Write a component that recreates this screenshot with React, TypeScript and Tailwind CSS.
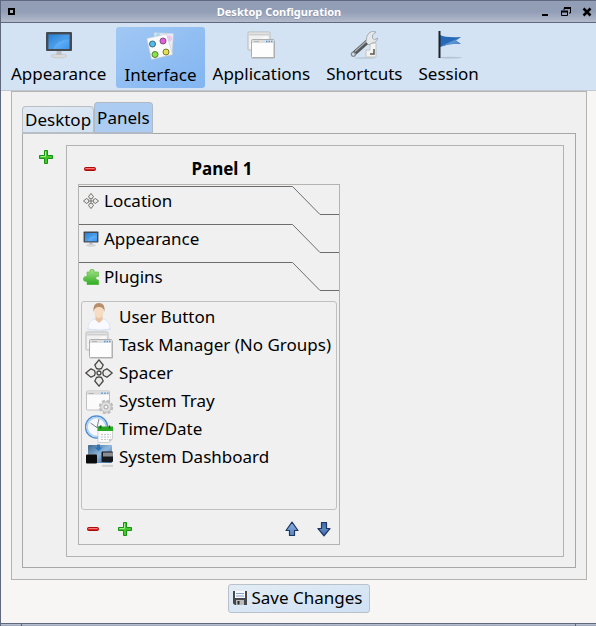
import type { ReactNode } from "react";

function MonitorIcon({ className }: { className: string }) {
  return (
    <svg viewBox="0 0 28 28" className={className} aria-hidden="true">
      <defs>
        <linearGradient id="screen" x1="0" y1="0" x2="1" y2="1">
          <stop offset="0" stopColor="#2c86dd" />
          <stop offset="0.5" stopColor="#62b1f7" />
          <stop offset="1" stopColor="#3d94ea" />
        </linearGradient>
      </defs>
      <ellipse cx="14" cy="25" rx="8" ry="2" fill="#dadada" stroke="#b5b9bd" strokeWidth="0.5" />
      <path d="M11.5 20h5v4h-5z" fill="#b9bcc0" />
      <rect x="1" y="1" width="26" height="19" rx="1" fill="#454a50" />
      <rect x="3.500" y="3.500" width="21" height="14.500" fill="url(#screen)" />
      <path d="M3.500 3.500H24.500V8Q12 9 8 18H3.500z" fill="#1f78cc" opacity="0.35" />
    </svg>
  );
}

function CardsIcon({ className }: { className: string }) {
  return (
    <svg viewBox="0 0 28 28" className={className} aria-hidden="true">
      <path d="M8 .8L27.500 1.500L26 23L11 22z" fill="#e9edf5" stroke="#c5cedd" strokeWidth="0.6" />
      <circle cx="12" cy="3.500" r="2.500" fill="#a9d8f5" />
      <circle cx="23" cy="6.500" r="3" fill="#efc5ee" />
      <path d="M.8 6.500L20.500 2L26.500 22.500L5.500 27.500z" fill="#fafafa" stroke="#c4c9d0" strokeWidth="0.6" />
      <circle cx="6.500" cy="12" r="3" fill="#4fc0ee" stroke="#426779" />
      <circle cx="17" cy="9" r="3" fill="#e45be0" stroke="#80517e" />
      <circle cx="9" cy="22.500" r="3" fill="#86e545" stroke="#557c39" />
      <circle cx="20" cy="20" r="3" fill="#e4e14a" stroke="#77753a" />
    </svg>
  );
}

function WindowsIcon({ className }: { className: string }) {
  return (
    <svg viewBox="0 0 28 28" className={className} aria-hidden="true">
      <rect x="1" y="1" width="22" height="18" rx="1" fill="#f1f1f1" stroke="#b9b9b9" />
      <path d="M2 3.500H22" stroke="#cfcfcf" strokeWidth="2" />
      <path d="M3 15L20 6" stroke="#fff" strokeWidth="3" opacity="0.7" />
      <path d="M4.500 27H27.500V10" fill="none" stroke="#8f8f8f" opacity="0.6" />
      <rect x="4.500" y="8.500" width="22.500" height="18" rx="1" fill="#fdfdfd" stroke="#adadad" />
      <path d="M5 10.500H26.500" stroke="#dedede" strokeWidth="3" />
      <path d="M7 10.500H12" stroke="#b5b5b5" />
      <path d="M19 10.500h1.500M21.500 10.500h1.500M24 10.500h1.500" stroke="#4e9be0" strokeWidth="1.500" />
    </svg>
  );
}

function WrenchIcon({ className }: { className: string }) {
  return (
    <svg viewBox="0 0 28 28" className={className} aria-hidden="true">
      <ellipse cx="15" cy="27" rx="11" ry="0.8" fill="#b8c7d6" />
      <path d="M20 12h6v14H16v-7h4z" fill="#f3f3f1" stroke="#c4c4c2" />
      <path d="M24 18v5h-4" fill="none" stroke="#555" strokeWidth="1.500" />
      <path d="M3.500 23L17 11" stroke="#55585b" strokeWidth="4.500" strokeLinecap="round" />
      <path d="M5 20.500L16 10.500" stroke="#aeb2b5" strokeWidth="1.200" />
      <circle cx="3.300" cy="23.300" r="2" fill="#d3e3f3" stroke="#8a8d90" strokeWidth="1.300" />
      <path d="M16 11Q16 5 19 2Q22 -1 26 1L22.500 4V7L24.500 9L27.500 7Q27 12 22 12L19 14z" fill="#e6e9eb" stroke="#9a9ea2" strokeWidth="0.8" />
    </svg>
  );
}

function FlagIcon({ className }: { className: string }) {
  return (
    <svg viewBox="0 0 28 28" className={className} aria-hidden="true">
      <ellipse cx="15" cy="26.700" rx="12" ry="0.9" fill="#b3c4d5" />
      <path d="M5 4Q11 7 26 6L21 9.500L26 13Q15 12 5 16z" fill="#2869b5" />
      <path d="M6 15.500Q12 12 25 6.800L20.500 9.500L25 12.500Q15 12 6 15.500z" fill="#5b93d2" />
      <path d="M4.500 0V27" stroke="#202326" strokeWidth="2" />
    </svg>
  );
}

function MoveIcon({ className }: { className: string }) {
  return (
    <svg viewBox="0 0 28 28" className={className} aria-hidden="true">
      <g fill="#ecebe7" stroke="#484846" strokeWidth="1.300" strokeLinejoin="round">
        <path d="M14 .8L18.200 6L16.500 9.500L14 10.200L11.500 9.500L9.800 6z" />
        <path d="M14 27.200L18.200 22L16.500 18.500L14 17.800L11.500 18.500L9.800 22z" />
        <path d="M.8 14L6 9.800L9.500 11.500L10.200 14L9.500 16.500L6 18.200z" />
        <path d="M27.200 14L22 9.800L18.500 11.500L17.800 14L18.500 16.500L22 18.200z" />
        <circle cx="14" cy="14" r="2" />
      </g>
    </svg>
  );
}

function PuzzleIcon({ className }: { className: string }) {
  return (
    <svg viewBox="0 0 16 16" className={className} aria-hidden="true">
      <defs>
        <linearGradient id="puzzle" x1="0" y1="0" x2="0" y2="1">
          <stop offset="0" stopColor="#a6e48a" />
          <stop offset="1" stopColor="#2faa22" />
        </linearGradient>
      </defs>
      <path
        d="M4 3H7Q6 .3 9 .3T11 3H15.700V7.500Q12.800 6.800 12.800 9T15.700 11V15.700H4V12.500Q.3 13 .3 9.800Q.6 7 4 7.500z"
        fill="url(#puzzle)"
        stroke="#55b83d"
        strokeWidth="0.6"
      />
    </svg>
  );
}

function UserIcon({ className }: { className: string }) {
  return (
    <svg viewBox="0 0 28 28" className={className} aria-hidden="true">
      <ellipse cx="14" cy="26" rx="12" ry="1.800" fill="#d5def2" />
      <path d="M3 26Q3 17.500 10 16H18Q25 17.500 25 26Q14 28 3 26z" fill="#f8faff" stroke="#d5dcec" strokeWidth="0.7" />
      <path d="M10.500 12h7v5L14 20L10.500 17z" fill="#e8c3a2" />
      <ellipse cx="14" cy="8" rx="4.800" ry="7" fill="#f6dcc3" />
      <path d="M8.500 9Q7.500 0 14 0T19.500 9Q18.500 4 14 4T8.500 9z" fill="#b98e6a" />
    </svg>
  );
}

function TrayIcon({ className }: { className: string }) {
  return (
    <svg viewBox="0 0 28 28" className={className} aria-hidden="true">
      <rect x="1.500" y="4" width="23" height="19" rx="1" fill="#fbfbfb" stroke="#c0c0c0" />
      <path d="M2 6.200H24" stroke="#dcdcdc" strokeWidth="3" />
      <path d="M3.500 6.500H9" stroke="#aeb5bc" />
      <path d="M16 6.200h2M19 6.200h2M22 6.200h1.500" stroke="#72a7df" strokeWidth="1.500" />
      <circle cx="21" cy="20" r="6" fill="none" stroke="#bdbdbd" strokeWidth="2.500" strokeDasharray="3 1.700" />
      <circle cx="21" cy="20" r="5.300" fill="#dedede" stroke="#bebebe" />
      <circle cx="21" cy="20" r="2" fill="#f5f5f5" stroke="#a5a5a5" />
    </svg>
  );
}

function ClockIcon({ className }: { className: string }) {
  return (
    <svg viewBox="0 0 28 28" className={className} aria-hidden="true">
      <circle cx="11.500" cy="12" r="11" fill="#f5f8fc" stroke="#4d91d4" strokeWidth="1.500" />
      <circle cx="11.500" cy="12" r="9.400" fill="none" stroke="#b5d1ec" strokeWidth="1.500" />
      <path d="M5.500 8L12 12.500L14 4M12 12.500L17 11" stroke="#7c838c" strokeWidth="1" fill="none" />
      <path d="M13 13H27.500V24L24 27.500H13z" fill="#fafafa" stroke="#bfc2bf" strokeWidth="0.7" />
      <path d="M12.500 11.500H28V16H12.500z" fill="#27a923" />
      <path d="M15.500 10.500v3M24.500 10.500v3" stroke="#145f14" strokeWidth="1.500" />
      <path d="M16 19.500H26M16 22H26M16 24.500H23" stroke="#c4c9cf" strokeDasharray="2 1" />
      <path d="M24 27.500V24H27.500z" fill="#c2c7c6" />
    </svg>
  );
}

function DashboardIcon({ className }: { className: string }) {
  return (
    <svg viewBox="0 0 28 28" className={className} aria-hidden="true">
      <defs>
        <linearGradient id="dash" x1="0" y1="0" x2="1" y2="1">
          <stop offset="0" stopColor="#3d668d" />
          <stop offset="0.5" stopColor="#8eb8de" />
          <stop offset="1" stopColor="#315c88" />
        </linearGradient>
      </defs>
      <rect x="3" y="2" width="24" height="18" rx="1" fill="url(#dash)" />
      <path d="M12 1.500h3v3h2.500L13.500 8L9.500 4.500H12z" fill="#2b73ba" />
      <rect x="1" y="11.500" width="11" height="9" rx="1" fill="#080a0c" />
      <path d="M3 11.500h7" stroke="#555" />
      <rect x="16.500" y="8.500" width="11.500" height="10.500" rx="1" fill="#16191d" />
      <rect x="18" y="9.500" width="10" height="4" fill="#8a8e92" />
      <path d="M17 22.800H28" stroke="#cfcfcf" strokeWidth="2" />
    </svg>
  );
}

function PlusIcon() {
  return (
    <svg viewBox="0 0 16 16" className="size-4" aria-hidden="true">
      <path d="M6.500 1.500h3v5h5v3h-5v5h-3v-5h-5v-3h5z" fill="#45c62d" stroke="#159310" strokeLinejoin="round" />
      <path d="M7.500 2.500v5h-5" fill="none" stroke="#a0ec8c" />
    </svg>
  );
}

function MinusIcon() {
  return (
    <svg viewBox="0 0 16 16" className="size-4" aria-hidden="true">
      <rect x="2.500" y="6.500" width="11" height="3" rx="1" fill="#dd2222" stroke="#a90a0a" />
      <path d="M3.500 7.500h9" stroke="#f47a7a" />
    </svg>
  );
}

function ArrowIcon({ down = false }: { down?: boolean }) {
  return (
    <svg viewBox="0 0 16 16" className="size-4" aria-hidden="true">
      <defs>
        <linearGradient id="arrowUp" x1="0" y1="0" x2="0" y2="1">
          <stop offset="0" stopColor="#8fb0de" />
          <stop offset="1" stopColor="#5a86c2" />
        </linearGradient>
        <linearGradient id="arrowDown" x1="0" y1="0" x2="0" y2="1">
          <stop offset="0" stopColor="#3c68a6" />
          <stop offset="0.5" stopColor="#5e86bd" />
          <stop offset="1" stopColor="#3566a8" />
        </linearGradient>
      </defs>
      <path
        d={down ? "M5.500 1.500h5v6h3.500L8 14.800L2 7.500h3.500z" : "M5.500 14.500h5v-5h3.500L8 1.200L2 9.500h3.500z"}
        fill={down ? "url(#arrowDown)" : "url(#arrowUp)"}
        stroke="#1c3763"
        strokeWidth="1.200"
        strokeLinejoin="round"
      />
    </svg>
  );
}

function SaveIcon() {
  return (
    <svg viewBox="0 0 16 16" className="size-4" aria-hidden="true">
      <path d="M1 1h14v14H3l-2-1.500z" fill="#46474b" />
      <path d="M3 1h10v7H3z" fill="#fafafa" />
      <path d="M4 3.500h8M4 6h8" stroke="#7f9dc5" />
      <path d="M4 10h8v5H4z" fill="#b9babb" />
      <path d="M5.500 11h2v3.500h-2z" fill="#292a2d" />
    </svg>
  );
}

const tools = [
  { label: "Appearance", Icon: MonitorIcon },
  { label: "Interface", Icon: CardsIcon },
  { label: "Applications", Icon: WindowsIcon },
  { label: "Shortcuts", Icon: WrenchIcon },
  { label: "Session", Icon: FlagIcon },
];

const plugins = [
  { label: "User Button", Icon: UserIcon },
  { label: "Task Manager (No Groups)", Icon: WindowsIcon },
  { label: "Spacer", Icon: MoveIcon },
  { label: "System Tray", Icon: TrayIcon },
  { label: "Time/Date", Icon: ClockIcon },
  { label: "System Dashboard", Icon: DashboardIcon },
];

const sections = [
  { label: "Location", Icon: MoveIcon },
  { label: "Appearance", Icon: MonitorIcon },
  { label: "Plugins", Icon: PuzzleIcon },
];

function SectionHeader({ icon, label }: { icon: ReactNode; label: string }) {
  return (
    <div className="flex h-[38px] items-start">
      <button className="flex h-7 flex-1 items-center gap-[5px] border-t border-[#6f6d6b] pl-1 text-left">
        {icon}
        {label}
      </button>
      <svg viewBox="0 0 47 30" className="h-[30px] w-[47px]" aria-hidden="true">
        <path d="M0 .5H.5L28 28.500H47" fill="none" stroke="#6f6d6b" />
      </svg>
    </div>
  );
}

function IconButton({ label, children }: { label: string; children: ReactNode }) {
  return (
    <button aria-label={label} className="flex size-7 items-center justify-center">
      {children}
    </button>
  );
}

export default function App() {
  return (
    <div className="flex min-h-screen flex-col border-l border-[#60687e] bg-[#f7f6f4] font-['Noto_Sans',sans-serif] text-[17px] leading-6 text-black">
      <header className="flex h-[23px] items-center border-t border-b border-[#60687e] bg-linear-to-b from-[#929db6] from-50% to-[#b3bbcb] pr-[3px] pl-[6px]">
        <button aria-label="Window menu" className="flex h-4 w-[14px] items-center">
          <svg viewBox="0 0 9 9" className="size-[9px]" aria-hidden="true">
            <path d="M2 2h5v5H2z" fill="#a5acbd" stroke="#000" strokeWidth="2" />
          </svg>
        </button>
        <h1 className="flex-1 text-center text-[11px] leading-4 font-bold text-white text-shadow-2xs">Desktop Configuration</h1>
        <div className="flex w-[56px] justify-end gap-[9px]">
          <button aria-label="Minimize">
            <svg viewBox="0 0 12 12" className="size-3" aria-hidden="true">
              <path d="M3 9h6" stroke="#000" strokeWidth="2" />
            </svg>
          </button>
          <button aria-label="Maximize">
            <svg viewBox="0 0 12 12" className="size-3" aria-hidden="true">
              <path d="M4 4V2.500h6.500V7H9M1.500 5.500h6v4h-6z" fill="none" stroke="#000" />
              <path d="M4 2h7M1 5.500h7" stroke="#000" strokeWidth="2" />
            </svg>
          </button>
          <button aria-label="Close">
            <svg viewBox="0 0 12 12" className="size-3" aria-hidden="true">
              <path d="M2.500 2.500l7 7M9.500 2.500l-7 7" stroke="#000" strokeWidth="2.500" />
            </svg>
          </button>
        </div>
      </header>

      <nav className="flex h-[68px] items-end border-b border-[#c2c8cf] bg-[#d3e3f3] pb-[2px] pl-[2px]">
        {tools.map(({ label, Icon }) => (
          <button
            key={label}
            aria-pressed={label === "Interface"}
            className={
              label === "Interface"
                ? "ml-[2px] flex h-[61px] flex-col items-center gap-[3px] rounded-[3px] bg-linear-to-br from-[#a1c8f4] to-[#82b5f1] px-2 pt-[5px]"
                : "flex h-[61px] flex-col items-center gap-[3px] px-2 pt-1"
            }
          >
            <Icon className="size-7" />
            {label}
          </button>
        ))}
      </nav>

      <main className="mr-[9px] ml-[10px] flex flex-1 flex-col border border-[#b5b3b1] bg-[#f0f0f0] px-[10px] pt-[10px] pb-[11px]">
        <div role="tablist" className="z-10 -mb-px flex items-end">
          <button
            role="tab"
            aria-selected="false"
            className="h-7 rounded-t-[4px] border border-b-2 border-[#b9bec4] bg-linear-to-br from-[#e2eaf2] to-[#cfe1f3] px-[2px] pt-px"
          >
            Desktop
          </button>
          <button
            role="tab"
            aria-selected="true"
            className="h-8 rounded-t-[4px] border border-b-2 border-[#b0b9c4] bg-[#accdf1] px-[2px] pt-px"
          >
            Panels
          </button>
        </div>

        <section role="tabpanel" className="flex flex-1 border border-[#a9a7a5] pt-[11px] pr-[11px] pb-[10px]">
          <div className="flex w-[43px] justify-center pl-[3px]">
            <button aria-label="Add panel" className="flex size-6 items-center justify-center">
              <PlusIcon />
            </button>
          </div>
          <div className="flex flex-1 border border-[#b5b3b1] pt-[11px] pb-[11px] pl-[11px]">
            <div className="flex w-[262px] flex-col">
              <div className="flex h-[27px] items-start">
                <button aria-label="Remove panel" className="flex h-6 w-6 items-center justify-center">
                  <MinusIcon />
                </button>
                <h2 className="flex-1 pl-[2px] text-center font-bold">Panel 1</h2>
              </div>
              <div className="flex flex-1 flex-col border border-[#b5b3b1] pt-px">
                {sections.map(({ label, Icon }) => (
                  <SectionHeader key={label} label={label} icon={<Icon className="size-4" />} />
                ))}
                <ul className="mx-[2px] mt-px flex-1 rounded-[3px] border border-[#bfc0c2] py-px pl-[3px]">
                  {plugins.map(({ label, Icon }) => (
                    <li key={label} className="flex h-7 items-center gap-[6px] whitespace-nowrap">
                      <Icon className="size-7 shrink-0" />
                      {label}
                    </li>
                  ))}
                </ul>
                <div className="flex items-center gap-1 pt-[5px] pr-px pb-px">
                  <IconButton label="Remove plugin">
                    <MinusIcon />
                  </IconButton>
                  <IconButton label="Add plugin">
                    <PlusIcon />
                  </IconButton>
                  <span className="flex-1" />
                  <IconButton label="Move up">
                    <ArrowIcon />
                  </IconButton>
                  <IconButton label="Move down">
                    <ArrowIcon down />
                  </IconButton>
                </div>
              </div>
            </div>
          </div>
        </section>
      </main>

      <footer className="flex h-[43px] justify-center pt-1">
        <button className="flex h-[29px] items-center gap-1 rounded-[3px] border border-[#b9c1ca] bg-linear-to-br from-[#e3ecf4] to-[#cfe1f4] pr-[6px] pb-px pl-[3px]">
          <SaveIcon />
          Save Changes
        </button>
      </footer>
      <div className="flex h-[3px] justify-between border-t border-[#60687e] bg-linear-to-b from-[#c3c8d4] to-[#929db6] px-5">
        <span className="w-px bg-[#60687e]" />
        <span className="w-px bg-[#60687e]" />
      </div>
    </div>
  );
}
